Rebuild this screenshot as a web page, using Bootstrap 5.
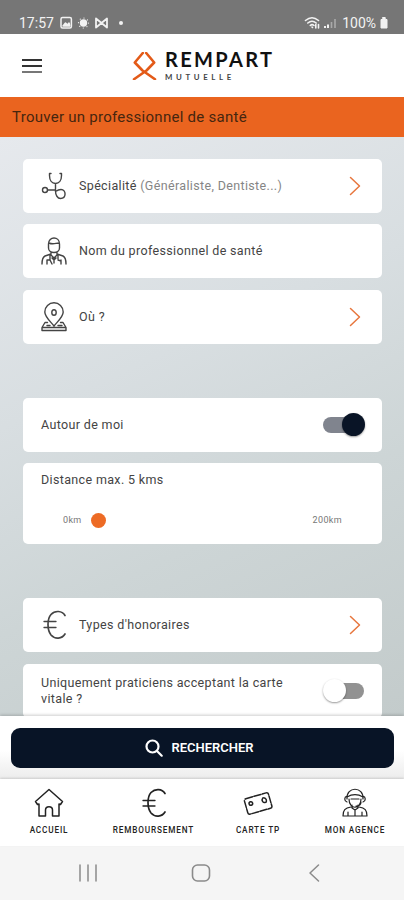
<!DOCTYPE html>
<html lang="fr">
<head>
<meta charset="utf-8">
<meta name="viewport" content="width=device-width, initial-scale=1">
<title>Rempart Mutuelle</title>
<link href="https://cdn.jsdelivr.net/npm/bootstrap@5.3.0/dist/css/bootstrap.min.css" rel="stylesheet">
<style>
body{font-family:Roboto,"Open Sans",sans-serif;font-size:12.5px;line-height:16px;color:#444;background:#f5f5f5}
svg{display:block;flex:none;fill:none;stroke:currentColor;stroke-linecap:round;stroke-linejoin:round}
.app{height:900px}
.status-bar{height:34px;background:#767676;color:#f2f2f2;padding:15px 16px 0 19px;font-size:14px}
.app-header{height:63px;padding:0 22px}
.brand{margin-left:90px}
.brand-mark{color:#e35a18}
.brand-name{font:700 20px/20px Lato,sans-serif;letter-spacing:2.35px;color:#111}
.brand-sub{font:700 7.5px/9px Lato,sans-serif;letter-spacing:3.5px;color:#444}
.brand-sub span{display:inline-block;transform:scaleX(1.04);transform-origin:left}
.page-title{height:40px;background:#ea641f;color:#46260f;padding:0 12px;font-size:15px;letter-spacing:.27px}
.page-main{height:579px;padding:22px 22px 0 23px;background:linear-gradient(155deg,#e6e9ed 0%,#d8dee1 38%,#cdd5d6 65%,#c3cbcb 100%)}
.tile{height:54px;padding:0 18px;border-radius:5px;letter-spacing:.35px}
.tile-icon{padding-right:21px;padding-left:17px}
.tile-label{padding-left:11px}
.hint{color:#858585}
.gap-tile{margin-bottom:11.400px}
.gap-section{margin-bottom:54px}
.tile-range{height:81px;padding-top:9px}
.range-row{font-size:9px;color:#777;padding:0 22px;letter-spacing:.35px}
.range-dot{width:15px;height:15px;background:#ed6b25;margin-left:9px}
.chev{color:#e7763d}
.toggle{width:41px;height:24px}
.toggle-track{width:34px;height:16px;border-radius:8px;background:#80848e}
.toggle-knob{width:23px;height:23px;margin-left:-15px;background:#091426;box-shadow:0 1px 2px #0006}
.toggle-off .toggle-track{background:#929292}
.toggle-off .toggle-knob{margin:0 -16px 0 0;background:#fff;z-index:1}
.tile-tall{height:54px}
.search-bar{height:63px;padding:12px 10px 0 11px;background:linear-gradient(#fff 55%,#ececec);box-shadow:0 -1px 3px #0003;position:relative}
.btn-search{height:40px;background:#081426;color:#fff;border-radius:9px;font-size:13px;font-weight:600;letter-spacing:0;padding:0 6px 0 0}
.btn-search:hover{background:#14233c;color:#fff}
.tabs{height:67px;padding:8px 0 0 14px;position:relative;box-shadow:0 -1px 2px #0002}
.tabs a{color:#222;font-size:8.200px;line-height:14px;letter-spacing:.85px;font-weight:500;white-space:nowrap}
.tab-home{width:70px}
.tab-refund{width:139px}
.tab-card{width:70px}
.tab-agency{width:98px}
.system-bar{height:54px;color:#8b8b8b;background:#f5f5f5;padding:0 84px 0 79px}
.home-key{margin-right:4px}
</style>
<script src="https://cdn.jsdelivr.net/npm/bootstrap@5.3.0/dist/js/bootstrap.bundle.min.js"></script>
</head>
<body>
<div class="app d-flex flex-column overflow-hidden">
  <div class="status-bar d-flex justify-content-between">
    <div class="d-flex gap-1">
      <span>17:57</span>
      <svg width="66" height="16" viewBox="0 0 66 16" stroke-width="1.500"><rect x="3" y="2.500" width="10.400" height="10.500" rx="1.500"/><path d="M5 11l2.500-3 2 2 1.500-2 .8 3z" fill="currentColor"/><circle cx="25.500" cy="8" r="3.700" fill="currentColor" stroke="none"/><circle cx="25.500" cy="8" r="5" stroke-width="1.200" stroke-dasharray=".1 3.800"/><path d="M38 12.500V3.500l5.500 4.500L49 3.500v9M38 12.500L43.500 8l5.500 4.500" stroke-width="1.800"/><circle cx="63" cy="8" r="2" fill="currentColor" stroke="none"/></svg>
    </div>
    <div class="d-flex">
      <svg width="35" height="16" viewBox="0 0 35 16" stroke-width="1.600" transform="translate(-3)"><path d="M1.500 5.500Q8 0 14.500 5.500M3.800 8Q8 4.500 12.200 8M6.300 10.500Q8 8.800 10 10.500M8 12l.5.500M11.800 9.500v3.500M14.500 9.500v3.500"/><path d="M21 13v-2M24 13V9.500" stroke-width="2" stroke-linecap="butt"/><path d="M27.500 13V7M31 13V4" stroke="#aaa" stroke-width="1.600" stroke-linecap="butt"/></svg>
      <span class="me-1">100%</span>
      <svg width="8" height="16" viewBox="1 0 8 16"><path d="M3.800 2.500h2.400v2H8v8.500H2V4.500h1.800z" fill="currentColor"/></svg>
    </div>
  </div>
  <header class="app-header bg-white d-flex align-items-center">
    <svg width="20" height="16" viewBox="0 0 20 16" stroke-width="2" stroke-linecap="butt" color="#333"><path d="M0 2h20M0 8h20"/><path d="M0 14h20" stroke="#777"/></svg>
    <div class="brand d-flex align-items-center">
      <svg class="brand-mark me-2" width="25" height="28" viewBox="0 0 25 28" stroke-width="2.600" stroke-linecap="butt" stroke-linejoin="miter"><path d="M10.800 1L2.800 10.500l7.700 8L23 27.200M14.200 1l8 9.500-7.700 8L2 27.200"/></svg>
      <div><div class="brand-name">REMPART</div><div class="brand-sub mt-1"><span>MUTUELLE</span></div></div>
    </div>
  </header>
  <h1 class="page-title d-flex align-items-center m-0 fw-normal">Trouver un professionnel de santé</h1>
  <main class="page-main overflow-hidden">
    <div class="tile tile-icon gap-tile bg-white d-flex align-items-center">
      <svg width="28" height="30" viewBox="0 0 28 30" stroke-width="1.400"><path d="M11 2.500H9.500v2c0 5 2.500 8 6 8s6-3 6-8v-2H20M15.500 12.500V20c0 4 2 7.500 5 7.500 6 0 6-9 .5-9-2.500 0-4 1-5.500 2M15.500 19H7.500"/><circle cx="5" cy="19" r="2.500"/></svg>
      <span class="tile-label">Spécialité <span class="hint">(Généraliste, Dentiste...)</span></span>
      <svg class="chev ms-auto" width="12" height="20" viewBox="0 0 12 20" stroke-width="1.500"><path d="M1.500 1.500l9 8.500-9 8.500"/></svg>
    </div>
    <div class="tile tile-icon gap-tile bg-white d-flex align-items-center">
      <svg width="28" height="30" viewBox="0 0 28 30" stroke-width="1.400"><path d="M8.500 8c0-8 11-8 11 0v4c0 6-11 6-11 0zM9 7c4 2 7 0 10 0M11 16.500V19l3 3 3-3v-2.500M11 18l-6 2c-2 1-3 4-3 8M17 18l6 2c2 1 3 4 3 8M7 28v-4M21 28v-4M10 19v5M7 24h3l2 4M14 22v5M18 19v4M18 24l3 1v3M12 22l2 2 2-2"/></svg>
      <span class="tile-label">Nom du professionnel de santé</span>
    </div>
    <div class="tile tile-icon gap-section bg-white d-flex align-items-center">
      <svg width="28" height="30" viewBox="0 0 28 30" stroke-width="1.400"><path d="M14 24C9 18 4.800 14.500 4.800 10a9.200 9.200 0 0118.400 0c0 4.500-4.200 8-9.200 14zM7.500 20.500H5L2 25.500h24l-3-5h-2.500M2 25.500v3h24v-3M7 23.500h3M18 23.500h4"/><ellipse cx="14" cy="10.500" rx="2.200" ry="2.800"/></svg>
      <span class="tile-label">Où ?</span>
      <svg class="chev ms-auto" width="12" height="20" viewBox="0 0 12 20" stroke-width="1.500"><path d="M1.500 1.500l9 8.500-9 8.500"/></svg>
    </div>
    <div class="tile gap-tile bg-white d-flex align-items-center justify-content-between">
      <span>Autour de moi</span>
      <div class="toggle d-flex align-items-center"><div class="toggle-track flex-shrink-0"></div><div class="toggle-knob rounded-circle flex-shrink-0"></div></div>
    </div>
    <div class="tile tile-range gap-section bg-white">
      <div>Distance max. 5 kms</div>
      <div class="range-row d-flex align-items-center mt-4"><span>0km</span><span class="range-dot rounded-circle"></span><span class="ms-auto">200km</span></div>
    </div>
    <div class="tile tile-icon gap-tile bg-white d-flex align-items-center">
      <svg width="28" height="30" viewBox="0 0 28 30" stroke-width="1.700"><path d="M25 5.500C22 .5 15 .2 11 4.500 7 9 7 20 11 25c4 4.500 11 4 14-1"/><path d="M4 11.500h12M4 17.500h12" stroke-width="1.300"/></svg>
      <span class="tile-label">Types d'honoraires</span>
      <svg class="chev ms-auto" width="12" height="20" viewBox="0 0 12 20" stroke-width="1.500"><path d="M1.500 1.500l9 8.500-9 8.500"/></svg>
    </div>
    <div class="tile tile-tall bg-white d-flex align-items-center justify-content-between">
      <span>Uniquement praticiens acceptant la carte<br>vitale ?</span>
      <div class="toggle toggle-off d-flex align-items-center"><div class="toggle-knob rounded-circle flex-shrink-0"></div><div class="toggle-track flex-shrink-0"></div></div>
    </div>
  </main>
  <div class="search-bar">
    <button class="btn btn-search w-100 d-flex align-items-center justify-content-center gap-2" type="button">
      <svg width="18" height="18" viewBox="0 0 18 18" stroke-width="2.200"><circle cx="7.500" cy="7.500" r="6"/><path d="M12 12l4.700 4.700"/></svg>RECHERCHER
    </button>
  </div>
  <nav class="tabs bg-white d-flex text-center">
    <a class="tab-home text-decoration-none" href="#"><svg class="mx-auto mb-1" width="32" height="32" viewBox="0 0 32 32" stroke-width="1.500"><path d="M16 2.500L2.500 14.500l2 3 1.500-.5v12h6.500v-6c0-4.500 7-4.500 7 0v6H26V17l1.500.5 2-3z"/></svg>ACCUEIL</a>
    <a class="tab-refund text-decoration-none" href="#"><svg class="mx-auto mb-1" width="32" height="32" viewBox="0 0 32 32" stroke-width="1.700"><path d="M27 6.500C24 1.500 17 1.500 13 5.500 9 10 9 21 13 26c4 4.500 11 4 14-1"/><path d="M5 13.500h12M5 19h12" stroke-width="1.300"/></svg>REMBOURSEMENT</a>
    <a class="tab-card text-decoration-none" href="#"><svg class="mx-auto mb-1" width="32" height="32" viewBox="0 0 32 32" stroke-width="1.500"><g transform="rotate(-16 16 16)"><rect x="3.500" y="8.500" width="25" height="16" rx="2" stroke-dasharray="7 1.500"/><circle cx="9" cy="14.500" r="1.800"/><path d="M22 12.500c-2.500 2-1 5 1 5M23 12.500c2.500 1 2 4 1 5"/></g></svg>CARTE TP</a>
    <a class="tab-agency text-decoration-none ms-auto" href="#"><svg class="mx-auto mb-1" width="32" height="32" viewBox="0 0 32 32" stroke="#444" stroke-width="1.200"><path d="M8 12c-1-13 17-13 16 0M8 10c5-3 11-3 16 0M8 9c-3 1-3 5 0 6M24 9c3 1 3 5 0 6M10 12c0 11 12 11 12 0M12 12h8M13 18v3l3 2 3-2v-3M12 20c-6 1-8 3-8 9h24c0-6-2-8-8-9M16 23v6M9 25v4M23 25v4M22 15c0 4-3 4-5 4"/></svg>MON AGENCE</a>
  </nav>
  <div class="system-bar d-flex align-items-center justify-content-between">
    <svg width="18" height="18" viewBox="0 0 18 18" stroke-width="1.500" stroke-linecap="butt"><path d="M1 1v16M9 1v16M17 1v16"/></svg>
    <svg class="home-key" width="20" height="20" viewBox="0 0 20 20" stroke-width="1.600"><rect x="1.500" y="2" width="17" height="16" rx="5"/></svg>
    <svg width="12" height="18" viewBox="0 0 12 18" stroke-width="1.500"><path d="M10.500 1L2 9l8.500 8"/></svg>
  </div>
</div>
</body>
</html>
